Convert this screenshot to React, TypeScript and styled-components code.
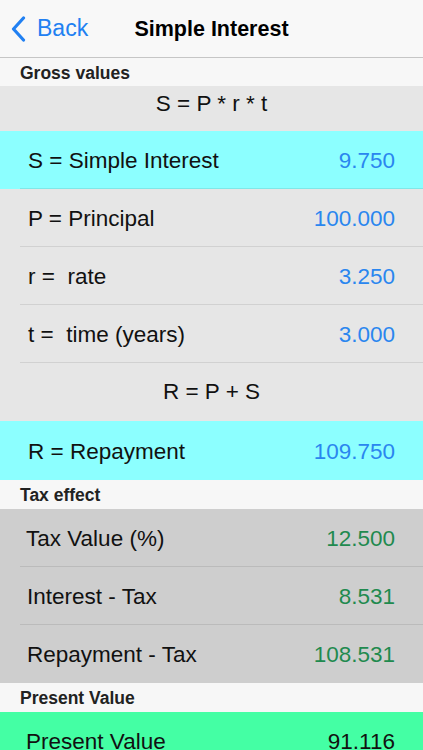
import styled, {createGlobalStyle} from 'styled-components'

const GlobalStyle = createGlobalStyle`
  html, body {
    margin: 0;
    padding: 0;
    background: #f7f7f7;
    font-family: "Liberation Sans", Arial, sans-serif;
  }
`

const Screen = styled.div`
  width: 423px;
  height: 750px;
  overflow: hidden;
  background: #f7f7f7;
`

const NavBar = styled.div`
  position: relative;
  height: 58px;
  display: flex;
  align-items: center;
  justify-content: center;
  background: #f8f8f8;
  border-bottom: 1px solid #c6c6c6;
  box-sizing: border-box;
`

const BackButton = styled.div`
  position: absolute;
  left: 11px;
  top: 0;
  bottom: 0;
  display: flex;
  align-items: center;
  gap: 11px;
  color: #2180f2;
  font-size: 23px;
`

const Title = styled.h1`
  margin: 2px 0 0;
  font-size: 21.5px;
  font-weight: 700;
  color: #000;
`

const SectionHeader = styled.div<{$h?: number}>`
  height: ${({$h}) => $h ?? 29}px;
  box-sizing: border-box;
  padding: 2px 0 0 20px;
  display: flex;
  align-items: center;
  background: #f7f7f7;
  font-size: 17.5px;
  font-weight: 700;
  color: #222;
`

const Formula = styled.div<{$h: number; $lift?: number}>`
  height: ${({$h}) => $h}px;
  box-sizing: border-box;
  padding-bottom: ${({$lift}) => $lift ?? 0}px;
  display: flex;
  align-items: center;
  justify-content: center;
  background: #e6e6e6;
  font-size: 22.5px;
  color: #111;
`

const Row = styled.div<{$bg: string; $pad: number; $sep?: boolean}>`
  position: relative;
  height: 58px;
  box-sizing: border-box;
  display: flex;
  align-items: center;
  justify-content: space-between;
  padding: 2px 28px 0 ${({$pad}) => $pad}px;
  background: ${({$bg}) => $bg};
  font-size: 22.5px;
  color: #111;

  &::after {
    content: '';
    display: ${({$sep}) => ($sep ? 'block' : 'none')};
    position: absolute;
    left: 20px;
    right: 0;
    bottom: 0;
    height: 1px;
    background: rgba(0, 0, 0, 0.09);
  }
`

const Value = styled.span<{$color: string}>`
  color: ${({$color}) => $color};
`

const Chevron = () => (
  <svg width="15" height="26" viewBox="0 0 15 26">
    <polyline points="12.5,2 2.5,13 12.5,24" fill="none" stroke="#2180f2" strokeWidth="3.2" strokeLinecap="round" strokeLinejoin="round" />
  </svg>
)

const BLUE = '#2a86ef'
const GREEN = '#1f8a4f'
const CYAN = '#8cffff'
const GREY = '#e6e6e6'
const TAX = '#cecece'

export default function App() {
  return (
    <Screen>
      <GlobalStyle />
      <NavBar>
        <BackButton>
          <Chevron />
          Back
        </BackButton>
        <Title>Simple Interest</Title>
      </NavBar>

      <SectionHeader $h={28}>Gross values</SectionHeader>
      <Formula $h={45} $lift={10}>S = P * r * t</Formula>
      <Row $bg={CYAN} $pad={28} $sep>
        <span>S = Simple Interest</span>
        <Value $color={BLUE}>9.750</Value>
      </Row>
      <Row $bg={GREY} $pad={28} $sep>
        <span>P = Principal</span>
        <Value $color={BLUE}>100.000</Value>
      </Row>
      <Row $bg={GREY} $pad={28} $sep>
        <span>r = &nbsp;rate</span>
        <Value $color={BLUE}>3.250</Value>
      </Row>
      <Row $bg={GREY} $pad={28} $sep>
        <span>t = &nbsp;time (years)</span>
        <Value $color={BLUE}>3.000</Value>
      </Row>
      <Formula $h={58}>R = P + S</Formula>
      <Row $bg={CYAN} $pad={28} style={{height: 59}}>
        <span>R = Repayment</span>
        <Value $color={BLUE}>109.750</Value>
      </Row>

      <SectionHeader>Tax effect</SectionHeader>
      <Row $bg={TAX} $pad={26} $sep>
        <span>Tax Value (%)</span>
        <Value $color={GREEN}>12.500</Value>
      </Row>
      <Row $bg={TAX} $pad={27} $sep>
        <span>Interest - Tax</span>
        <Value $color={GREEN}>8.531</Value>
      </Row>
      <Row $bg={TAX} $pad={27}>
        <span>Repayment - Tax</span>
        <Value $color={GREEN}>108.531</Value>
      </Row>

      <SectionHeader>Present Value</SectionHeader>
      <Row $bg="#44ffa4" $pad={26}>
        <span>Present Value</span>
        <Value $color="#111">91.116</Value>
      </Row>
    </Screen>
  )
}
